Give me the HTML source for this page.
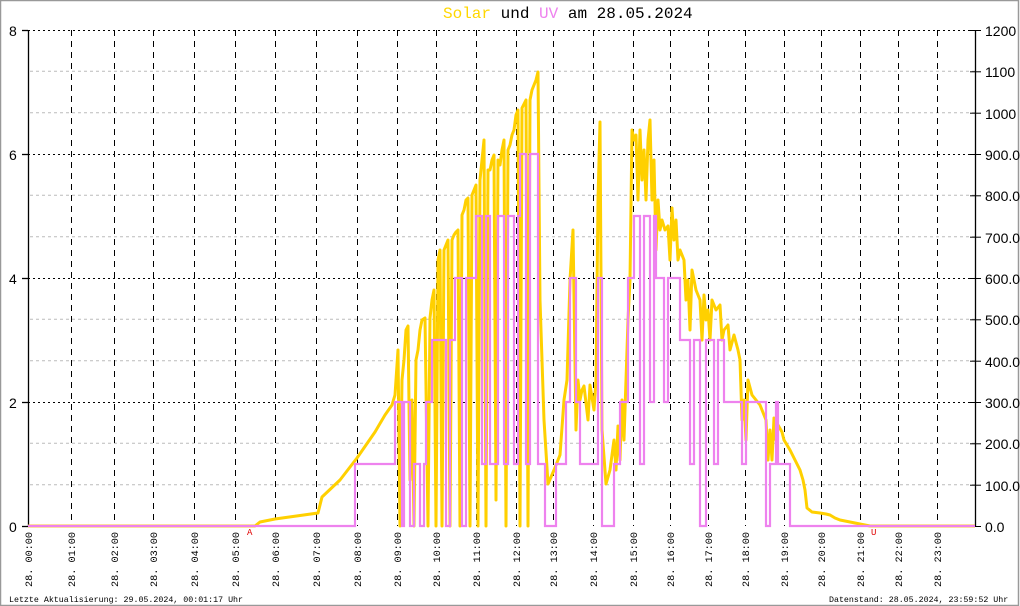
<!DOCTYPE html>
<html><head><meta charset="utf-8"><style>
html,body{margin:0;padding:0;background:#fff}
svg{display:block}
.m{font-family:"Liberation Mono",monospace}
.s{font-family:"Liberation Sans",sans-serif}
</style></head><body>
<svg width="1020" height="606" viewBox="0 0 1020 606" xmlns="http://www.w3.org/2000/svg">
<rect x="0" y="0" width="1020" height="606" fill="#fff"/>
<rect x="0.5" y="0.5" width="1018" height="605" fill="none" stroke="#999" stroke-width="1.5"/>
<text class="m" x="443" y="18" font-size="16"><tspan fill="#ffd700">Solar</tspan><tspan fill="#000"> und </tspan><tspan fill="#ee82ee">UV</tspan><tspan fill="#000"> am 28.05.2024</tspan></text>
<g stroke="#bbb" stroke-dasharray="3,3" stroke-width="1">
<line x1="30" y1="71.3" x2="975" y2="71.3"/><line x1="30" y1="112.7" x2="975" y2="112.7"/>
<line x1="30" y1="195.3" x2="975" y2="195.3"/><line x1="30" y1="236.7" x2="975" y2="236.7"/>
<line x1="30" y1="319.3" x2="975" y2="319.3"/><line x1="30" y1="360.7" x2="975" y2="360.7"/>
<line x1="30" y1="443.3" x2="975" y2="443.3"/><line x1="30" y1="484.7" x2="975" y2="484.7"/>
</g>
<g stroke="#000" stroke-dasharray="2,3" stroke-width="1">
<line x1="28" y1="30.5" x2="975" y2="30.5"/><line x1="28" y1="154.5" x2="975" y2="154.5"/>
<line x1="28" y1="278.5" x2="975" y2="278.5"/><line x1="28" y1="402.5" x2="975" y2="402.5"/>
</g>
<g stroke="#000" stroke-dasharray="6,5" stroke-width="1">
<line x1="71.5" y1="30" x2="71.5" y2="526"/><line x1="114.5" y1="30" x2="114.5" y2="526"/>
<line x1="153.5" y1="30" x2="153.5" y2="526"/><line x1="194.5" y1="30" x2="194.5" y2="526"/>
<line x1="235.5" y1="30" x2="235.5" y2="526"/><line x1="275.5" y1="30" x2="275.5" y2="526"/>
<line x1="316.5" y1="30" x2="316.5" y2="526"/><line x1="357.5" y1="30" x2="357.5" y2="526"/>
<line x1="397.5" y1="30" x2="397.5" y2="526"/><line x1="436.5" y1="30" x2="436.5" y2="526"/>
<line x1="476.5" y1="30" x2="476.5" y2="526"/><line x1="516.5" y1="30" x2="516.5" y2="526"/>
<line x1="553.5" y1="30" x2="553.5" y2="526"/><line x1="593.5" y1="30" x2="593.5" y2="526"/>
<line x1="633.5" y1="30" x2="633.5" y2="526"/><line x1="670.5" y1="30" x2="670.5" y2="526"/>
<line x1="708.5" y1="30" x2="708.5" y2="526"/><line x1="745.5" y1="30" x2="745.5" y2="526"/>
<line x1="784.5" y1="30" x2="784.5" y2="526"/><line x1="821.5" y1="30" x2="821.5" y2="526"/>
<line x1="860.5" y1="30" x2="860.5" y2="526"/><line x1="898.5" y1="30" x2="898.5" y2="526"/>
<line x1="937.5" y1="30" x2="937.5" y2="526"/>
</g>
<g stroke="#000" stroke-width="1.3">
<line x1="28.5" y1="30" x2="28.5" y2="527"/><line x1="975.5" y1="30" x2="975.5" y2="527"/>
<line x1="22" y1="30.5" x2="28" y2="30.5"/><line x1="22" y1="154.5" x2="28" y2="154.5"/>
<line x1="22" y1="278.5" x2="28" y2="278.5"/><line x1="22" y1="402.5" x2="28" y2="402.5"/>
<line x1="22" y1="526.5" x2="28" y2="526.5"/>
</g>
<g stroke="#000" stroke-width="1">
<line x1="970" y1="30.5" x2="981" y2="30.5"/><line x1="970" y1="71.8" x2="981" y2="71.8"/>
<line x1="970" y1="113.2" x2="981" y2="113.2"/><line x1="970" y1="154.5" x2="981" y2="154.5"/>
<line x1="970" y1="195.8" x2="981" y2="195.8"/><line x1="970" y1="237.2" x2="981" y2="237.2"/>
<line x1="970" y1="278.5" x2="981" y2="278.5"/><line x1="970" y1="319.8" x2="981" y2="319.8"/>
<line x1="970" y1="361.2" x2="981" y2="361.2"/><line x1="970" y1="402.5" x2="981" y2="402.5"/>
<line x1="970" y1="443.8" x2="981" y2="443.8"/><line x1="970" y1="485.2" x2="981" y2="485.2"/>
<line x1="970" y1="526.5" x2="981" y2="526.5"/>
</g>
<g class="s" font-size="14" fill="#000">
<text x="9" y="36">8</text><text x="9" y="160">6</text><text x="9" y="284">4</text><text x="9" y="408">2</text><text x="9" y="532">0</text>
<text x="985" y="36">1200</text><text x="985" y="77">1100</text><text x="985" y="119">1000</text>
<text x="985" y="160">900.0</text><text x="985" y="201">800.0</text><text x="985" y="243">700.0</text>
<text x="985" y="284">600.0</text><text x="985" y="325">500.0</text><text x="985" y="367">400.0</text>
<text x="985" y="408">300.0</text><text x="985" y="449">200.0</text><text x="985" y="491">100.0</text>
<text x="985" y="532">0.0</text>
</g>
<polyline fill="none" stroke="#ffd000" stroke-width="3" stroke-linejoin="round" points="28,526 255,526 260,522 275,519 318,513 322,497 340,480 357,458 375,432 385,415 392,405 395,395 398,350 400,526 402,380 404,360 406,330 408,326 410,480 412,400 414,526 416,360 418,350 420,330 422,320 425,318 428,526 430,318 432,300 434,290 436,526 438,260 440,250 442,526 444,250 446,245 448,240 450,526 452,240 454,235 456,232 458,230 460,526 462,215 464,210 466,200 468,198 470,526 472,195 474,190 476,185 478,526 480,180 482,160 484,140 486,526 488,170 490,170 492,160 494,155 496,500 498,160 500,165 502,150 504,140 506,526 508,150 510,145 512,135 514,130 516,115 518,110 520,526 522,108 524,104 526,100 528,526 530,100 532,90 534,85 536,80 538,72 540,300 544,420 548,484 554,470 560,455 564,400 567,380 570,280 573,230 576,430 578,380 580,400 582,390 584,386 588,420 590,385 594,410 596,380 598,200 600,122 602,430 606,484 610,470 614,440 616,470 618,426 620,460 622,400 624,440 626,380 628,320 630,280 632,130 634,140 636,135 638,200 640,130 642,180 644,150 646,200 648,140 650,120 652,200 654,160 656,250 658,200 660,230 662,220 665,230 668,226 670,260 672,208 674,240 676,220 678,260 680,250 684,260 686,300 688,280 690,330 692,270 696,290 700,300 702,340 704,295 706,320 708,310 710,340 712,300 716,310 720,305 722,340 724,330 728,325 730,350 734,335 738,350 740,360 742,420 744,400 746,440 748,380 752,395 756,400 760,405 764,415 766,420 768,460 770,430 772,460 774,418 776,440 778,425 782,432 784,440 790,450 795,460 800,470 803,480 805,490 807,508 812,512 820,513 826,514 830,515 835,518 840,520 850,522 860,524 870,526 975,526"/>
<polyline fill="none" stroke="#ee82ee" stroke-width="2.2" points="28,526 355,526 355,464 395,464 395,402 402,402 402,526 404,526 404,402 410,402 410,526 414,526 414,464 420,464 420,526 424,526 424,464 426,464 426,402 432,402 432,340 446,340 446,526 450,526 450,340 455,340 455,278 462,278 462,526 466,526 466,278 476,278 476,216 482,216 482,464 486,464 486,216 490,216 490,464 498,464 498,216 504,216 504,464 508,464 508,216 514,216 514,464 518,464 518,216 520,216 520,154 526,154 526,464 530,464 530,154 538,154 538,464 545,464 545,526 556,526 556,464 566,464 566,402 570,402 570,278 576,278 576,402 580,402 580,464 598,464 598,278 602,278 602,526 614,526 614,464 620,464 620,402 628,402 628,278 634,278 634,216 640,216 640,464 644,464 644,216 650,216 650,402 654,402 654,216 656,216 656,278 664,278 664,402 668,402 668,278 680,278 680,340 690,340 690,464 694,464 694,340 700,340 700,526 706,526 706,340 714,340 714,464 718,464 718,340 724,340 724,402 742,402 742,464 746,464 746,402 766,402 766,526 770,526 770,464 776,464 776,402 778,402 778,464 790,464 790,526 975,526"/>
<text class="m" x="247" y="535" font-size="9" fill="#e00000">A</text>
<text class="m" x="871" y="535" font-size="9" fill="#e00000">U</text>
<g class="m" font-size="10.2" fill="#000">
<text transform="translate(32,587) rotate(-90)">28. 00:00</text>
<text transform="translate(75,587) rotate(-90)">28. 01:00</text>
<text transform="translate(118,587) rotate(-90)">28. 02:00</text>
<text transform="translate(157,587) rotate(-90)">28. 03:00</text>
<text transform="translate(198,587) rotate(-90)">28. 04:00</text>
<text transform="translate(239,587) rotate(-90)">28. 05:00</text>
<text transform="translate(279,587) rotate(-90)">28. 06:00</text>
<text transform="translate(320,587) rotate(-90)">28. 07:00</text>
<text transform="translate(361,587) rotate(-90)">28. 08:00</text>
<text transform="translate(401,587) rotate(-90)">28. 09:00</text>
<text transform="translate(440,587) rotate(-90)">28. 10:00</text>
<text transform="translate(480,587) rotate(-90)">28. 11:00</text>
<text transform="translate(520,587) rotate(-90)">28. 12:00</text>
<text transform="translate(557,587) rotate(-90)">28. 13:00</text>
<text transform="translate(597,587) rotate(-90)">28. 14:00</text>
<text transform="translate(637,587) rotate(-90)">28. 15:00</text>
<text transform="translate(674,587) rotate(-90)">28. 16:00</text>
<text transform="translate(712,587) rotate(-90)">28. 17:00</text>
<text transform="translate(749,587) rotate(-90)">28. 18:00</text>
<text transform="translate(788,587) rotate(-90)">28. 19:00</text>
<text transform="translate(825,587) rotate(-90)">28. 20:00</text>
<text transform="translate(864,587) rotate(-90)">28. 21:00</text>
<text transform="translate(902,587) rotate(-90)">28. 22:00</text>
<text transform="translate(941,587) rotate(-90)">28. 23:00</text>
</g>
<text class="m" x="9" y="602" font-size="8.3" fill="#000">Letzte Aktualisierung: 29.05.2024, 00:01:17 Uhr</text>
<text class="m" x="829" y="602" font-size="8.3" fill="#000">Datenstand: 28.05.2024, 23:59:52 Uhr</text>
</svg>
</body></html>
